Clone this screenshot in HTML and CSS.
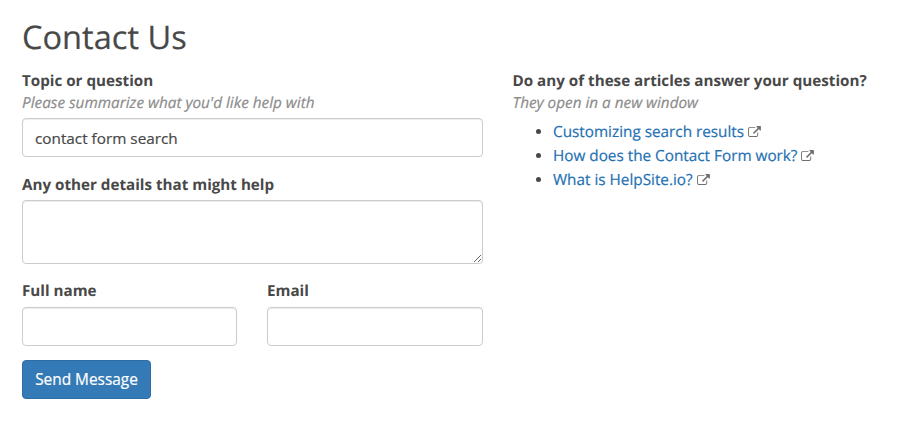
FILE: index.html
```html
<!DOCTYPE html>
<html lang="en">
<head>
<meta charset="utf-8">
<title>Contact Us</title>
<link rel="stylesheet" href="styles.css">
</head>
<body>
<svg class="sprite" aria-hidden="true"><symbol id="external" viewBox="0 0 1792 1536"><path d="M1408 928v320q0 119-84.500 203.500T1120 1536H288q-119 0-203.500-84.500T0 1248V416q0-119 84.500-203.500T288 128h704q14 0 23 9t9 23v64q0 14-9 23t-23 9H288q-66 0-113 47t-47 113v832q0 66 47 113t113 47h832q66 0 113-47t47-113V928q0-14 9-23t23-9h64q14 0 23 9t9 23zM1792 64v512q0 26-19 45t-45 19-45-19l-176-176-652 652q-10 10-23 10t-23-10L695 983q-10-10-10-23t10-23l652-652-176-176q-19-19-19-45t19-45 45-19h512q26 0 45 19t19 45z"/></symbol></svg>
<main class="page">
<h1>Contact Us</h1>
<div class="columns">
<form class="form">
<div class="field topic">
<label for="topic">Topic or question</label>
<p class="hint">Please summarize what you'd like help with</p>
<input id="topic" type="text" value="contact form search">
</div>
<div class="field details">
<label for="details">Any other details that might help</label>
<textarea id="details"></textarea>
</div>
<div class="pair">
<div class="field"><label for="name">Full name</label><input id="name" type="text"></div>
<div class="field"><label for="email">Email</label><input id="email" type="email"></div>
</div>
<button type="button">Send Message</button>
</form>
<aside class="articles">
<h2>Do any of these articles answer your question?</h2>
<p class="hint">They open in a new window</p>
<ul>
<li><a href="#">Customizing search results</a><svg class="icon"><use href="#external"/></svg></li>
<li><a href="#">How does the Contact Form work?</a><svg class="icon"><use href="#external"/></svg></li>
<li><a href="#">What is HelpSite.io?</a><svg class="icon"><use href="#external"/></svg></li>
</ul>
</aside>
</div>
</main>
</body>
</html>
```
FILE: styles.css
```css
* { box-sizing: border-box; }
body { margin: 0; background: #fff; color: #484848; font: 15.300px/22px "Open Sans", sans-serif; text-rendering: geometricPrecision; -webkit-text-stroke: 0.200px currentColor; }
.sprite { position: absolute; width: 0; height: 0; }
.page { padding: 15px 22px 0; }
h1 { margin: 0; font-size: 32.600px; line-height: 44px; font-weight: 400; }
.columns { display: grid; grid-template-columns: 461px 1fr; column-gap: 29.500px; margin-top: 11px; }
label, h2 { display: block; margin: 0; padding-top: 1px; font-size: 15.200px; line-height: 21px; font-weight: 700; -webkit-text-stroke: 0; }
h2 { white-space: nowrap; }
.hint { margin: 0; line-height: 22px; font-style: italic; color: #8c8c8c; }
input, textarea { display: block; width: 100%; height: 39px; margin: 0; padding: 6px 12px; border: 1px solid #ccc; border-radius: 4px; background: #fff; color: #484848; font: 15.300px/22px "Open Sans", sans-serif; box-shadow: inset 0 1px 1px rgba(0,0,0,.075); }
.topic input { margin-top: 4px; }
.details { margin-top: 17px; }
textarea { height: 64px; margin-top: 4px; resize: vertical; }
.pair { display: grid; grid-template-columns: 215px 216px; gap: 30px; margin-top: 16px; }
.pair input { margin-top: 5px; }
button { display: block; width: 129px; height: 39px; margin-top: 14px; padding: 0; border: 1px solid #2e6da4; border-radius: 4px; background: #337ab7; color: #fff; font: 15.400px/22px "Open Sans", sans-serif; }
ul { margin: 6px 0 0; padding-left: 40.500px; }
li { line-height: 24.200px; }
a { color: #2470b3; text-decoration: none; }
.icon { display: inline-block; width: 13px; height: 11px; margin-left: 4px; vertical-align: 0; fill: #707070; }
```
